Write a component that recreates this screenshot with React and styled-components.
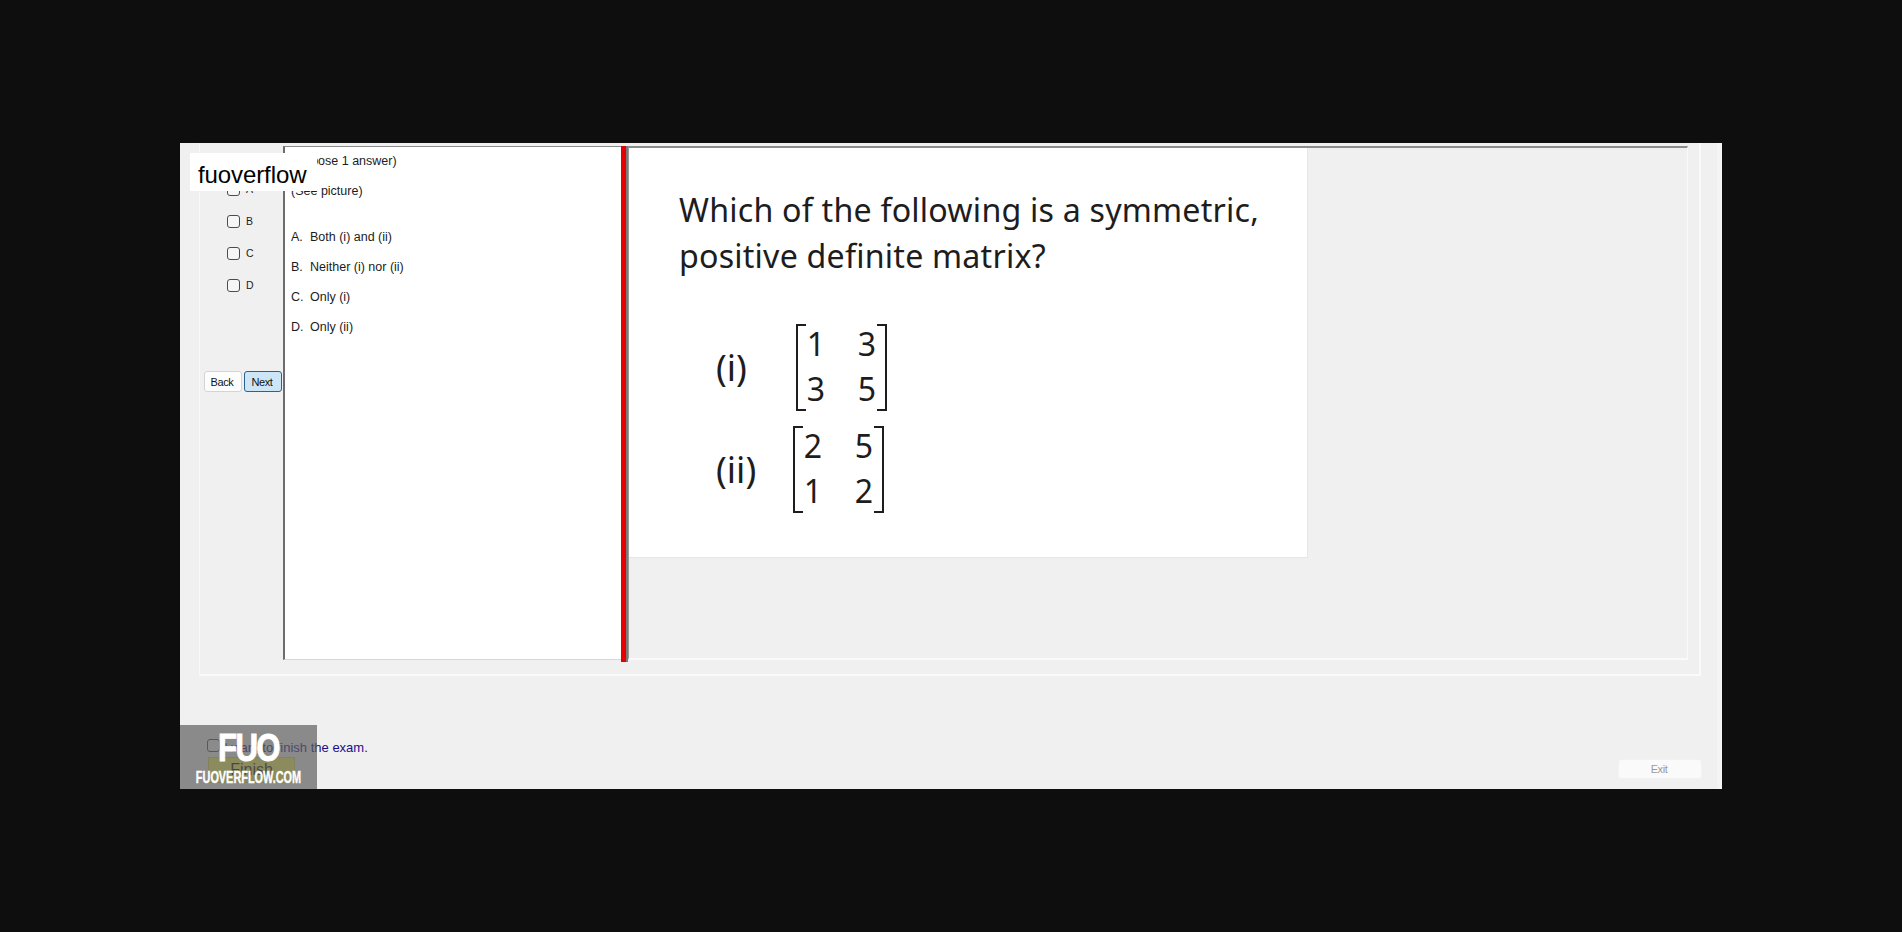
import styled, { createGlobalStyle } from "styled-components"

const GlobalStyle = createGlobalStyle`
  html, body {
    margin: 0;
    padding: 0;
    background: #0e0e0e;
  }
  * {
    box-sizing: border-box;
  }
`

const Screen = styled.div`
  height: 932px;
  padding: 143px 0 0 180px;
  overflow: hidden;
  font-family: "Liberation Sans", Arial, sans-serif;
`
const Window = styled.div`
  position: relative;
  width: 1542px;
  height: 646px;
  background: #f0f0f0;
  display: flex;
  flex-direction: column;
  border-right: 5px solid #f4f4f4;
`
const Group = styled.div`
  flex: none;
  height: 533px;
  margin-left: 19px;
  margin-right: 16px;
  padding: 3px 11px 14px 0;
  display: flex;
  border-left: 1px solid #f8f8f8;
  border-right: 2px solid #fafafa;
  border-bottom: 2px solid #fafafa;
`
const Sidebar = styled.div`
  width: 83px;
  flex: none;
  display: flex;
  flex-direction: column;
`
const Options = styled.div`
  padding: 37px 0 0 27px;
  height: 225px;
  display: flex;
  flex-direction: column;
  gap: 19px;
`
const Option = styled.label`
  display: flex;
  align-items: center;
  gap: 6px;
  height: 13px;
  font-size: 10.5px;
  color: #222;

  span {
    position: relative;
    top: -1px;
  }
`
const Check = styled.input.attrs({ type: "checkbox" })`
  appearance: none;
  width: 13px;
  height: 13px;
  margin: 0;
  flex: none;
  background: #f6f6f6;
  border: 1px solid #4c4c4c;
  border-radius: 3px;
`
const Nav = styled.div`
  display: flex;
  gap: 2px;
  padding-left: 4px;
`
const NavButton = styled.button`
  width: 38px;
  height: 21px;
  padding: 0 2px 0 0;
  font-family: inherit;
  font-size: 11px;
  letter-spacing: -0.4px;
  color: #111;
  border-radius: 3px;
  background: ${p => (p.$active ? "#cde6f7" : "#fdfdfd")};
  border: 1px solid ${p => (p.$active ? "#2c628b" : "#d4d4d4")};
`
const QuestionPane = styled.div`
  width: 338px;
  flex: none;
  background: #fff;
  border-left: 2px solid #6d6d6d;
  border-top: 1px solid #8a8a8a;
  border-bottom: 1px solid #d8d8d8;
  padding: 7px 0 0 6px;
  font-size: 12.5px;
  color: #1c1c1c;
`
const QuestionLine = styled.div`
  height: 15px;
  line-height: 15px;
  margin-bottom: ${p => p.$gap}px;
`
const Answer = styled.div`
  display: flex;
  height: 15px;
  line-height: 15px;
  margin-bottom: 15px;
`
const AnswerKey = styled.span`
  width: 19px;
  flex: none;
`
const Splitter = styled.div`
  width: 7px;
  flex: none;
  margin-bottom: -2px;
  background: #e60000;
  border-right: 2px solid #7a7a7a;
`
const PicturePane = styled.div`
  flex: 1;
  border-top: 2px solid #8c8c8c;
  border-left: 1px solid #9a9a9a;
  border-right: 1px solid #fafafa;
  border-bottom: 2px solid #fafafa;
`
const Picture = styled.div`
  width: 679px;
  height: 410px;
  background: #fff;
  border-right: 1px solid #e6e6e6;
  border-bottom: 1px solid #e6e6e6;
  padding: 39px 0 0 50px;
  font-family: "Noto Sans", "Open Sans", sans-serif;
  color: #1d1d1d;
`
const Heading = styled.div`
  font-size: 32.2px;
  line-height: 46px;
  white-space: nowrap;
  letter-spacing: 0.2px;
  margin-bottom: 45px;
`
const Formula = styled.div`
  display: flex;
  align-items: center;
  height: 87px;
  margin-left: 37px;
  margin-bottom: 15px;
`
const FormulaLabel = styled.div`
  width: ${p => p.$width}px;
  font-size: 36px;
  line-height: 44px;
  flex: none;
`
const Matrix = styled.div`
  position: relative;
  width: 91px;
  height: 87px;
  display: grid;
  grid-template-columns: 40px 40px;
  grid-auto-rows: 40px;
  column-gap: 11px;
  row-gap: 5px;
  justify-content: center;
  align-content: center;
  font-size: 32px;
  text-align: center;
  line-height: 38px;

  &::before,
  &::after {
    content: "";
    position: absolute;
    top: 0;
    bottom: 0;
    width: 8px;
    border: 2px solid #1d1d1d;
  }
  &::before {
    left: 0;
    border-right: 0;
  }
  &::after {
    right: 0;
    border-left: 0;
  }
`
const Footer = styled.div`
  flex: 1;
  display: flex;
  justify-content: space-between;
  padding: 63px 15px 0 27px;
`
const FinishColumn = styled.div`
  display: flex;
  flex-direction: column;
  gap: 5px;
`
const FinishConfirm = styled.label`
  display: flex;
  align-items: center;
  gap: 4px;
  height: 13px;
  font-size: 13px;
  color: #1a0f8c;
  white-space: nowrap;

  span {
    position: relative;
    top: 2px;
  }
`
const FinishButton = styled.button`
  width: 87px;
  height: 26px;
  margin-left: 1px;
  padding: 0;
  font-family: inherit;
  font-size: 16px;
  color: #1a1a00;
  background: #f5f560;
  border: 1px solid #d8d860;
`
const ExitButton = styled.button`
  align-self: flex-end;
  margin-bottom: 10px;
  width: 84px;
  height: 20px;
  padding: 0 2px 0 0;
  font-family: inherit;
  font-size: 11px;
  letter-spacing: -0.4px;
  color: #9a9a9a;
  background: #fafafa;
  border: 1px solid #f2f2f2;
  border-radius: 3px;
`
const Watermark = styled.div`
  position: absolute;
  left: 10px;
  top: 10px;
  width: 127px;
  height: 38px;
  padding-left: 8px;
  background: #fff;
  color: #000;
  font-size: 24px;
  line-height: 43px;
  letter-spacing: -0.1px;
`
const LogoBadge = styled.div`
  position: absolute;
  left: 0;
  bottom: 0;
  width: 137px;
  height: 64px;
  background: rgba(94, 94, 94, 0.7);
  color: #fff;
  text-align: center;
  overflow: hidden;
`
const LogoMark = styled.div`
  position: absolute;
  left: 0;
  right: 0;
  top: 3px;
  font-size: 39px;
  line-height: 40px;
  font-weight: 700;
  letter-spacing: -2px;
  -webkit-text-stroke: 1px #fff;
  transform: scaleX(0.8);
`
const LogoName = styled.div`
  position: absolute;
  left: -20px;
  right: -20px;
  top: 43px;
  font-size: 16.5px;
  line-height: 18px;
  font-weight: 700;
  white-space: nowrap;
  -webkit-text-stroke: 0.4px #fff;
  transform: scaleX(0.66);
`

const OPTIONS = ["A", "B", "C", "D"]
const ANSWERS = [
  ["A.", "Both (i) and (ii)"],
  ["B.", "Neither (i) nor (ii)"],
  ["C.", "Only (i)"],
  ["D.", "Only (ii)"],
]

export default function App() {
  return (
    <>
      <GlobalStyle />
      <Screen>
        <Window>
          <Group>
            <Sidebar>
              <Options>
                {OPTIONS.map(o => (
                  <Option key={o}>
                    <Check />
                    <span>{o}</span>
                  </Option>
                ))}
              </Options>
              <Nav>
                <NavButton>Back</NavButton>
                <NavButton $active>Next</NavButton>
              </Nav>
            </Sidebar>

            <QuestionPane>
              <QuestionLine $gap={15}>(Choose 1 answer)</QuestionLine>
              <QuestionLine $gap={31}>(See picture)</QuestionLine>
              {ANSWERS.map(([key, text]) => (
                <Answer key={key}>
                  <AnswerKey>{key}</AnswerKey>
                  {text}
                </Answer>
              ))}
            </QuestionPane>

            <Splitter />

            <PicturePane>
              <Picture>
                <Heading>
                  Which of the following is a symmetric,
                  <br />
                  positive definite matrix?
                </Heading>
                <Formula>
                  <FormulaLabel $width={80}>(i)</FormulaLabel>
                  <Matrix>
                    <span>1</span>
                    <span>3</span>
                    <span>3</span>
                    <span>5</span>
                  </Matrix>
                </Formula>
                <Formula>
                  <FormulaLabel $width={77}>(ii)</FormulaLabel>
                  <Matrix>
                    <span>2</span>
                    <span>5</span>
                    <span>1</span>
                    <span>2</span>
                  </Matrix>
                </Formula>
              </Picture>
            </PicturePane>
          </Group>

          <Footer>
            <FinishColumn>
              <FinishConfirm>
                <Check />
                <span>I want to finish the exam.</span>
              </FinishConfirm>
              <FinishButton>Finish</FinishButton>
            </FinishColumn>
            <ExitButton>Exit</ExitButton>
          </Footer>

          <Watermark>fuoverflow</Watermark>
          <LogoBadge>
            <LogoMark>FUO</LogoMark>
            <LogoName>FUOVERFLOW.COM</LogoName>
          </LogoBadge>
        </Window>
      </Screen>
    </>
  )
}
